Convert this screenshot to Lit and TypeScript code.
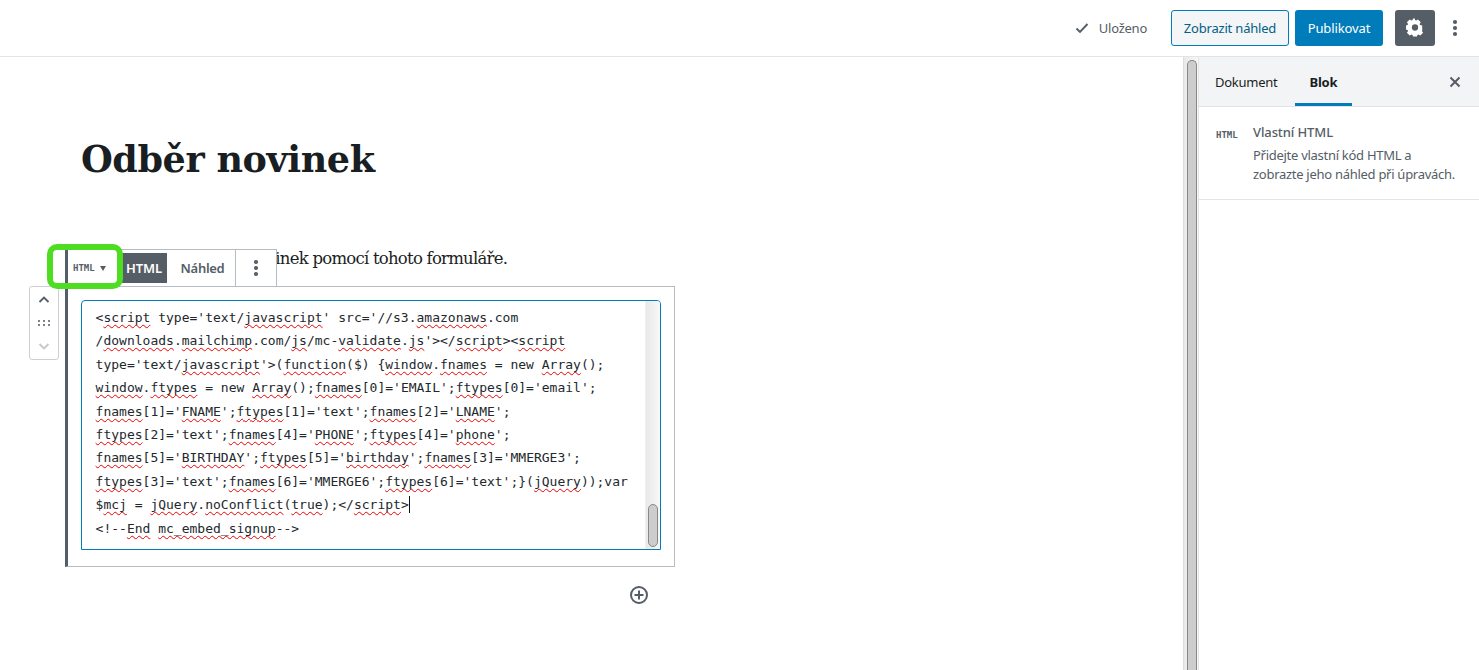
import { LitElement, html, css } from "lit";
import { customElement } from "lit/decorators.js";

const LINES = [
  "<~script~ type='text/~javascript~' src='//s3.~amazonaws~.com",
  "/~downloads~.~mailchimp~.com/~js~/mc-~validate~.~js~'></~script~><~script~",
  "type='text/~javascript~'>(~function~($) {~window~.~fnames~ = new ~Array~();",
  "~window~.~ftypes~ = new ~Array~();~fnames~[0]='EMAIL';~ftypes~[0]='email';",
  "~fnames~[1]='~FNAME~';~ftypes~[1]='text';~fnames~[2]='~LNAME~';",
  "~ftypes~[2]='text';~fnames~[4]='~PHONE~';~ftypes~[4]='~phone~';",
  "~fnames~[5]='~BIRTHDAY~';~ftypes~[5]='~birthday~';~fnames~[3]='MMERGE3';",
  "~ftypes~[3]='text';~fnames~[6]='MMERGE6';~ftypes~[6]='text';}(~jQuery~));var",
  "$~mcj~ = ~jQuery~.~noConflict~(~true~);</~script~>|",
  "<!--~End~ ~mc_embed_signup~-->",
];

@customElement("app-root")
export class AppRoot extends LitElement {
  static styles = css`
    :host { display: block; position: relative; width: 1479px; height: 670px; overflow: hidden; background: #fff; color: #23282d; font-family: "Noto Sans", sans-serif; }
    * { box-sizing: border-box; }
    .top { height: 57px; border-bottom: 1px solid #e2e4e7; display: flex; align-items: center; font-size: 13px; }
    .saved { margin-left: auto; display: flex; align-items: center; color: #555d66; margin-right: 24px; letter-spacing: -.25px; }
    .saved svg { margin-right: 9px; }
    .btn { height: 36px; border-radius: 3px; display: flex; align-items: center; justify-content: center; font-size: 13px; }
    .preview { width: 118px; border: 1px solid #007cba; background: #f3f5f6; color: #016087; margin-right: 6px; letter-spacing: -.2px; }
    .publish { width: 88px; background: #007cba; color: #fff; margin-right: 12px; letter-spacing: -.1px; }
    .gear { width: 40px; height: 36px; background: #555d66; border-radius: 3px; display: flex; align-items: center; justify-content: center; margin-right: 12px; }
    .kebab { display: flex; margin-right: 12px; width: 24px; margin-left: -4px; justify-content: center; }
    .body { display: flex; height: 613px; }
    .editor { width: 1183px; flex: none; }
    .title { margin: 77px 0 0 81px; font: 700 36.5px/52px "DejaVu Serif", serif; letter-spacing: -.42px; color: #191e23; height: 52px; }
    .para { margin: 60px 0 0 81px; font: 400 16.5px/26px "DejaVu Serif", serif; letter-spacing: -.76px; color: #191e23; height: 26px; white-space: nowrap; }
    .block { position: relative; margin: 14px 0 0 65px; width: 610px; height: 281px; border: 1px solid #b5bcc2; border-left: 3px solid #555d66; padding: 13px 14px 0 13px; }
    .toolbar { position: absolute; left: -3px; top: -38px; height: 38px; display: flex; background: #fff; border: 1px solid #b5bcc2; border-left: 3px solid #555d66; width: 212px; align-items: center; }
    .switcher { width: 53px; display: flex; align-items: center; gap: 5px; font: 700 9px "DejaVu Sans Mono", monospace; color: #555d66; height: 100%; padding-left: 5px; white-space: nowrap; }
    .caret { width: 0; height: 0; border-left: 3.5px solid transparent; border-right: 3.5px solid transparent; border-top: 5px solid #555d66; }
    .tab { height: 30px; display: flex; align-items: center; justify-content: center; font-size: 13px; font-weight: 600; color: #555d66; }
    .tab.on { background: #555d66; color: #fff; width: 46px; letter-spacing: -.1px; }
    .tab.off { width: 68px; letter-spacing: -.3px; padding-left: 3px; }
    .more { width: 40px; height: 36px; border-left: 1px solid #b5bcc2; display: flex; align-items: center; justify-content: center; }
    .mover { position: absolute; left: -39px; top: -1px; width: 30px; height: 74px; border: 1px solid #ccd0d4; border-radius: 3px; display: flex; flex-direction: column; align-items: center; justify-content: space-between; padding: 4px 0; background: #fff; }
    .hl { position: absolute; left: 47px; top: 244px; width: 76px; height: 45px; border: 6px solid #4fdd23; border-radius: 10px; pointer-events: none; }
    .code { display: flex; width: 580px; height: 250px; border: 1px solid #007cba; border-radius: 4px 4px 0 0; overflow: hidden; background: #fff; }
    .lines { flex: 1; padding: 5px 0 0 13.600px; font: 400 13px/23.4px "DejaVu Sans Mono", monospace; color: #23282d; white-space: pre; }
    .line { display: block; height: 23.4px; }
    .w { text-decoration: underline wavy #e00; text-decoration-thickness: 1px; text-underline-offset: 2px; text-decoration-skip-ink: none; }
    .cursor { display: inline-block; width: 1px; height: 17px; background: #111; vertical-align: -4px; }
    .sb { flex: none; background: linear-gradient(90deg, #e9e9e9, #f8f8f8); display: flex; flex-direction: column; }
    .sb.inner { width: 15px; justify-content: flex-end; padding: 0 1px 2px 2px; border-left: 1px solid #f0f0f0; }
    .thumb { background: #cdcdcd; border: 1px solid #888; border-radius: 6px; }
    .sb.inner .thumb { height: 43px; width: 10px; }
    .sb.page { width: 15px; padding: 3px 2px 0 3px; border-left: 1px solid #ddd; }
    .sb.page .thumb { flex: 1; width: 10px; border-radius: 6px 6px 0 0; border-bottom: 0; }
    .plus { display: flex; margin: 17px 0 0 628px; }
    .side { width: 281px; flex: none; border-left: 1px solid #e2e4e7; }
    .tabs { height: 50px; background: #f3f4f5; border-bottom: 1px solid #e2e4e7; display: flex; align-items: stretch; font-size: 13px; color: #191e23; }
    .st { display: flex; align-items: center; padding: 0 16px; letter-spacing: -.25px; }
    .st.act { font-weight: 700; box-shadow: inset 0 -3px 0 #007cba; margin-left: 1px; padding: 0 15px; }
    .close { margin-left: auto; display: flex; align-items: center; margin-right: 17px; }
    .info { border-bottom: 1px solid #e2e4e7; height: 93px; padding: 16px 16px 0 17px; display: flex; }
    .ico { width: 37px; font: 700 9px "DejaVu Sans Mono", monospace; color: #555d66; padding-top: 7px; flex: none; }
    .nm { font-size: 13px; line-height: 19px; font-weight: 500; color: #555d66; margin-bottom: 4px; letter-spacing: -.1px; }
    .ds { font-size: 13px; line-height: 19px; color: #555d66; letter-spacing: -.28px; white-space: nowrap; }
  `;

  private line(src: string) {
    const parts = src.split("~");
    return html`<span class="line">${parts.map((p, i) => {
      if (i % 2) return html`<span class="w">${p}</span>`;
      if (p.endsWith("|")) return html`${p.slice(0, -1)}<span class="cursor"></span>`;
      return p;
    })}</span>`;
  }

  render() {
    const dots = (c: string) => html`<svg width="18" height="24" viewBox="0 0 18 24" fill="${c}"><circle cx="9" cy="6" r="2.1"/><circle cx="9" cy="12" r="2.1"/><circle cx="9" cy="18" r="2.1"/></svg>`;
    return html`
      <div class="top">
        <div class="saved">
          <svg width="16" height="16" viewBox="0 0 16 16" fill="none" stroke="#555d66" stroke-width="1.9"><path d="M2.5 8.5 6 12l7.5-8"/></svg>
          Uloženo
        </div>
        <div class="btn preview">Zobrazit náhled</div>
        <div class="btn publish">Publikovat</div>
        <div class="gear">
          <svg width="20" height="20" viewBox="0 0 20 20" fill="#fff"><path d="M18 12.2V7.8l-2.4-.5a6 6 0 0 0-.5-1.2l1.3-2-3.100-3.100-2 1.300a6 6 0 0 0-1.300-.5L9.800 0H7.800l-.5 1.800a6 6 0 0 0-1.200.5L4.100 1 1 4.100l1.300 2a6 6 0 0 0-.5 1.200L0 7.800v4.400l1.800.5c.1.400.3.800.5 1.200l-1.300 2L4.100 19l2-1.300c.4.200.8.400 1.200.5l.5 1.800h4.400l.5-1.800c.4-.1.800-.3 1.200-.5l2 1.300 3.100-3.100-1.300-2c.2-.4.400-.8.5-1.200zM10 13.500a3.500 3.500 0 1 1 0-7 3.500 3.500 0 0 1 0 7z" transform="translate(1 .5) scale(.9)"/></svg>
        </div>
        <div class="kebab">${dots("#555d66")}</div>
      </div>
      <div class="body">
        <div class="editor">
          <div class="title">Odběr novinek</div>
          <div class="para">Přihlaste se k odběru novinek pomocí tohoto formuláře.</div>
          <div class="block">
            <div class="toolbar">
              <div class="switcher">HTML <span class="caret"></span></div>
              <div class="tab on">HTML</div>
              <div class="tab off">Náhled</div>
              <div class="more">${dots("#555d66")}</div>
            </div>
            <div class="mover">
              <svg width="18" height="18" viewBox="0 0 18 18" fill="none" stroke="#555d66" stroke-width="1.800"><path d="m4.500 11 4.500-4.500 4.500 4.500"/></svg>
              <svg width="14" height="10" viewBox="0 0 14 10" fill="#7d848c"><rect x="1" y="2" width="2" height="2"/><rect x="6" y="2" width="2" height="2"/><rect x="11" y="2" width="2" height="2"/><rect x="1" y="6" width="2" height="2"/><rect x="6" y="6" width="2" height="2"/><rect x="11" y="6" width="2" height="2"/></svg>
              <svg width="18" height="18" viewBox="0 0 18 18" fill="none" stroke="#c3c8cd" stroke-width="1.800"><path d="m4.500 7 4.500 4.500 4.500-4.500"/></svg>
            </div>
            <div class="code">
              <div class="lines">${LINES.map((l) => this.line(l))}</div>
              <div class="sb inner"><div class="thumb"></div></div>
            </div>
          </div>
          <div class="plus">
            <svg width="22" height="22" viewBox="0 0 22 22" fill="none" stroke="#555d66" stroke-width="2"><circle cx="11" cy="11" r="8"/><path d="M11 6.500v9M6.500 11h9"/></svg>
          </div>
        </div>
        <div class="sb page"><div class="thumb"></div></div>
        <div class="side">
          <div class="tabs">
            <div class="st">Dokument</div>
            <div class="st act">Blok</div>
            <div class="close"><svg width="14" height="14" viewBox="0 0 14 14" fill="none" stroke="#555d66" stroke-width="2"><path d="m2.500 2.500 9 9M11.500 2.500l-9 9"/></svg></div>
          </div>
          <div class="info">
            <div class="ico">HTML</div>
            <div>
              <div class="nm">Vlastní HTML</div>
              <div class="ds">Přidejte vlastní kód HTML a<br />zobrazte jeho náhled při úpravách.</div>
            </div>
          </div>
        </div>
      </div>
      <div class="hl"></div>
    `;
  }
}
